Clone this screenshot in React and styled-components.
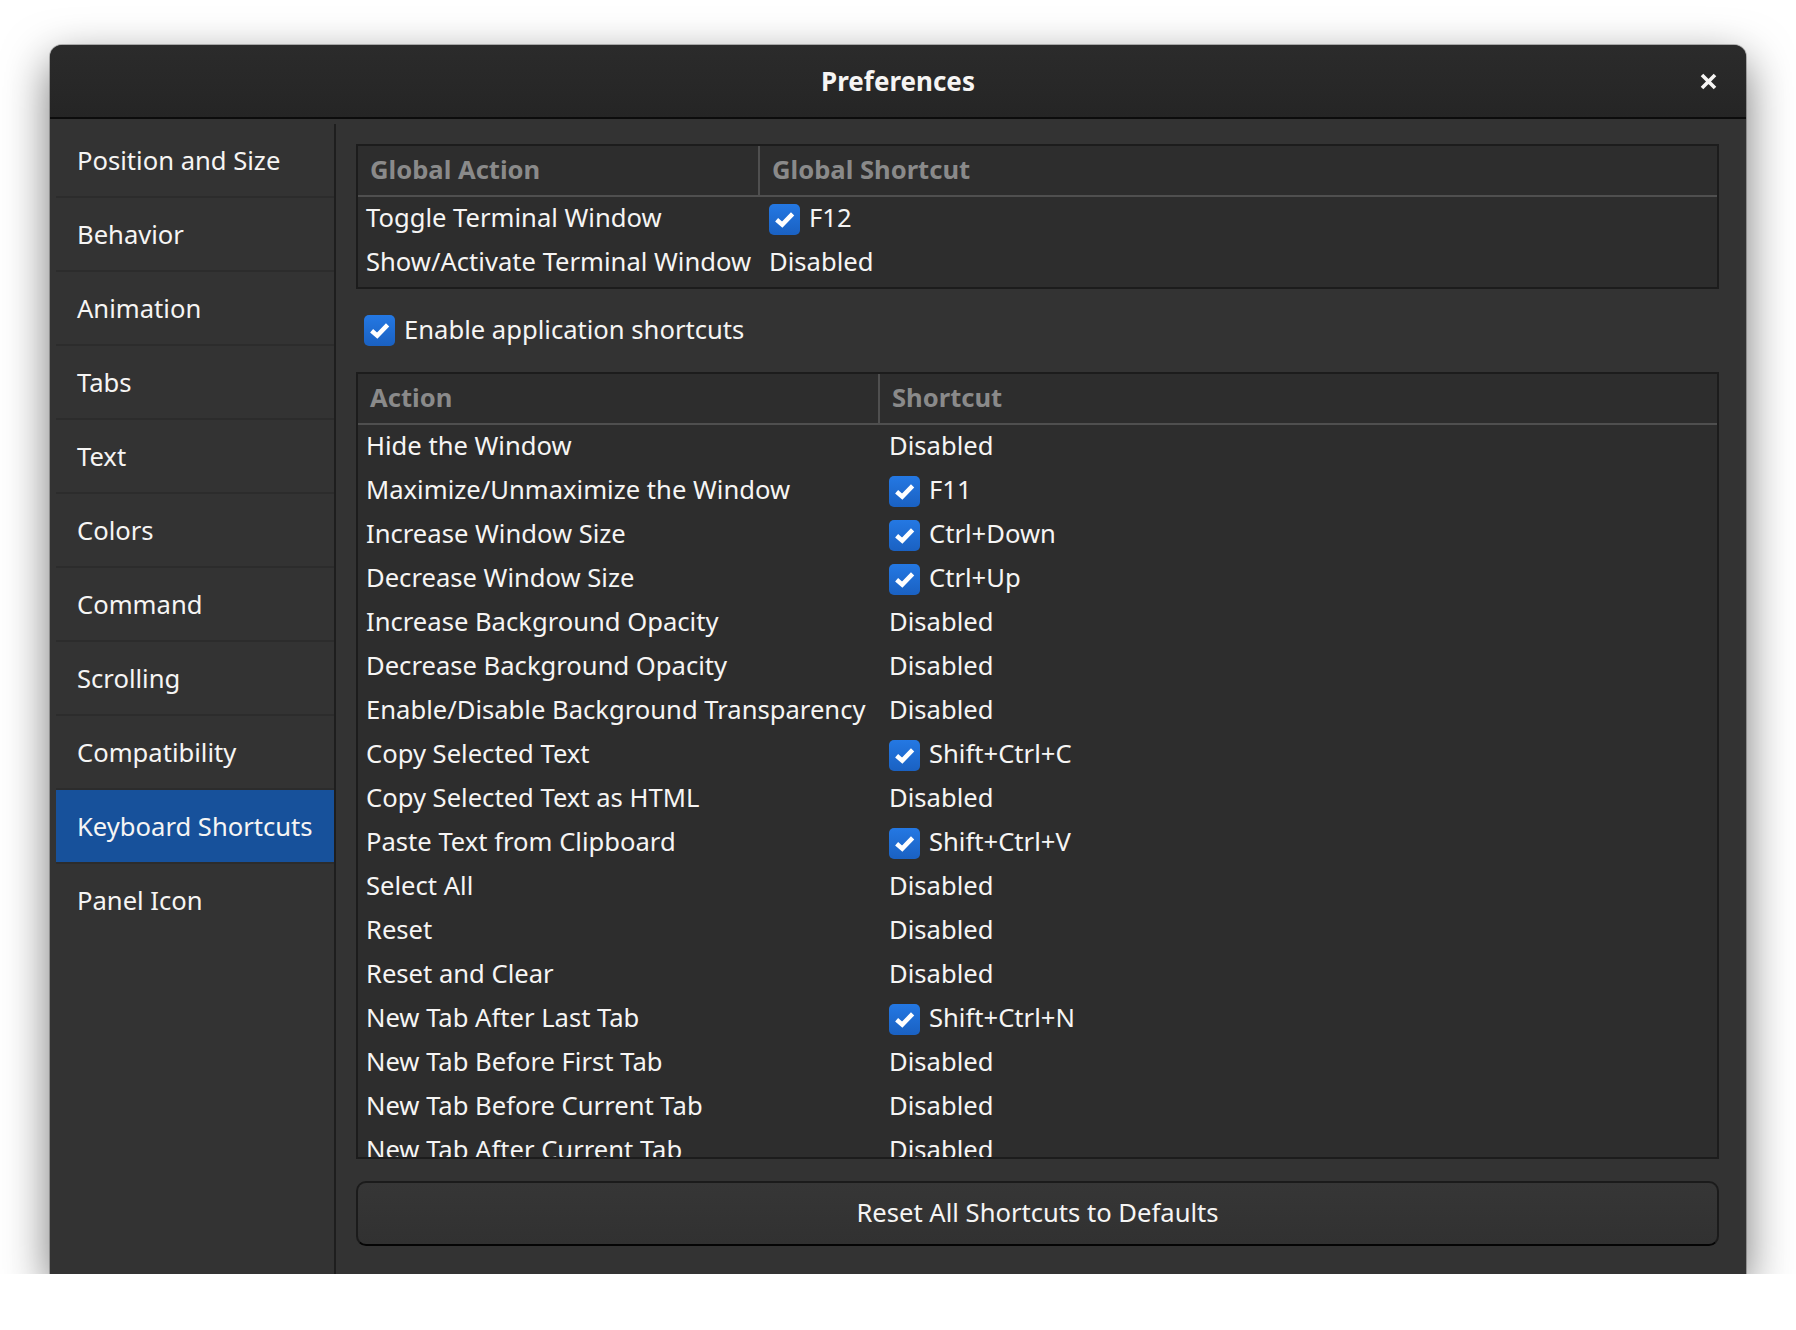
import React from 'react';
import styled, { createGlobalStyle } from 'styled-components';

const GlobalStyle = createGlobalStyle`
    html, body {
        margin: 0;
        background: #ffffff;
    }
    body {
        font-family: "Noto Sans", "Open Sans", sans-serif;
        color: #f6f5f4;
    }
`;

const Page = styled.div`
    padding: 45px 50px 0 50px;
`;

const Window = styled.div`
    width: 1696px;
    height: 1229px;
    display: flex;
    flex-direction: column;
    background: #333333;
    border-radius: 12px 12px 0 0;
    overflow: hidden;
    box-shadow: 0 16px 46px rgba(0, 0, 0, 0.55), 0 0 0 1px rgba(0, 0, 0, 0.25);
`;

const TitleBar = styled.header`
    height: 72px;
    flex: none;
    display: grid;
    grid-template-columns: 1fr auto 1fr;
    align-items: center;
    background: linear-gradient(#2b2b2b, #252525);
    border-bottom: 2px solid #0c0c0c;
`;

const Title = styled.div`
    grid-column: 2;
    font-size: 26px;
    font-weight: 700;
    color: #f6f5f4;
`;

const CloseButton = styled.button`
    justify-self: end;
    margin-right: 28px;
    width: 20px;
    height: 20px;
    padding: 0;
    border: 0;
    background: none;
    display: flex;
    align-items: center;
    justify-content: center;
`;

const Body = styled.div`
    flex: 1;
    display: flex;
    min-height: 0;
`;

const Sidebar = styled.nav`
    width: 278px;
    flex: none;
    margin-top: 5px;
    padding-left: 6px;
    border-right: 2px solid #1e1e1e;
    display: flex;
    flex-direction: column;
`;

const SideItem = styled.div`
    height: 72px;
    display: flex;
    align-items: center;
    padding-left: 21px;
    font-size: 25.6px;
    background: ${(p) => (p.$active ? '#17519b' : 'transparent')};
    border-bottom: 2px solid ${(p) => (p.$last ? 'transparent' : '#2c2c2c')};
`;

const Content = styled.main`
    flex: 1;
    min-width: 0;
    display: flex;
    flex-direction: column;
    gap: 22px;
    padding: 25px 27px 28px 20px;
`;

const Table = styled.div`
    background: #2d2d2d;
    border: 2px solid #1c1c1c;
    display: flex;
    flex-direction: column;
    padding-bottom: ${(p) => (p.$grow ? '0' : '2px')};
    ${(p) => (p.$grow ? 'flex: 1; min-height: 0; overflow: hidden;' : '')}
`;

const HeadRow = styled.div`
    display: grid;
    grid-template-columns: ${(p) => p.$first}px 1fr;
    height: 49px;
    flex: none;
    border-bottom: 2px solid #4f4f4f;
`;

const HeadCell = styled.div`
    display: flex;
    align-items: center;
    padding: 0 0 3px 12px;
    font-size: 25.6px;
    font-weight: 700;
    color: #8a8a8a;
    border-left: ${(p) => (p.$divider ? '2px solid #4f4f4f' : 'none')};
`;

const Row = styled.div`
    display: grid;
    grid-template-columns: ${(p) => p.$first}px 1fr;
    height: 44px;
    flex: none;
    align-items: center;
    font-size: 25.6px;
    white-space: nowrap;
`;

const ActionCell = styled.div`
    padding: 0 0 3px 8px;
`;

const ShortcutCell = styled.div`
    display: flex;
    align-items: center;
    gap: 9px;
    padding-left: 11px;

    & > span:last-child {
        padding-bottom: 3px;
    }
`;

const CheckBox = styled.span`
    width: 31px;
    height: 31px;
    flex: none;
    border-radius: 5px;
    background: linear-gradient(#2478e3, #1a61c2);
    display: inline-flex;
    align-items: center;
    justify-content: center;
`;

const EnableRow = styled.label`
    height: 39px;
    flex: none;
    display: flex;
    align-items: center;
    gap: 9px;
    padding-left: 8px;
    font-size: 25.6px;

    & > span:last-child {
        padding-bottom: 3px;
    }
`;

const ResetButton = styled.button`
    height: 65px;
    flex: none;
    border: 2px solid #1b1b1b;
    border-bottom-color: #050505;
    border-radius: 10px;
    background: linear-gradient(#363636, #313131);
    color: #f6f5f4;
    font-family: inherit;
    font-size: 25.6px;
    padding-bottom: 3px;
`;

function Check() {
    return (
        <CheckBox>
            <svg width="27" height="27" viewBox="0 0 24 24">
                <path
                    d="M5 12.2 L10 16.6 L19.2 7"
                    fill="none"
                    stroke="#ffffff"
                    strokeWidth="4"
                    strokeLinejoin="miter"
                />
            </svg>
        </CheckBox>
    );
}

const sideItems = [
    'Position and Size',
    'Behavior',
    'Animation',
    'Tabs',
    'Text',
    'Colors',
    'Command',
    'Scrolling',
    'Compatibility',
    'Keyboard Shortcuts',
    'Panel Icon',
];

const globalRows = [
    ['Toggle Terminal Window', 'F12'],
    ['Show/Activate Terminal Window', null],
];

const actionRows = [
    ['Hide the Window', null],
    ['Maximize/Unmaximize the Window', 'F11'],
    ['Increase Window Size', 'Ctrl+Down'],
    ['Decrease Window Size', 'Ctrl+Up'],
    ['Increase Background Opacity', null],
    ['Decrease Background Opacity', null],
    ['Enable/Disable Background Transparency', null],
    ['Copy Selected Text', 'Shift+Ctrl+C'],
    ['Copy Selected Text as HTML', null],
    ['Paste Text from Clipboard', 'Shift+Ctrl+V'],
    ['Select All', null],
    ['Reset', null],
    ['Reset and Clear', null],
    ['New Tab After Last Tab', 'Shift+Ctrl+N'],
    ['New Tab Before First Tab', null],
    ['New Tab Before Current Tab', null],
    ['New Tab After Current Tab', null],
];

function ShortcutTable({ first, head, rows, grow }) {
    return (
        <Table $grow={grow}>
            <HeadRow $first={first}>
                <HeadCell>{head[0]}</HeadCell>
                <HeadCell $divider>{head[1]}</HeadCell>
            </HeadRow>
            {rows.map(([action, key]) => (
                <Row $first={first} key={action}>
                    <ActionCell>{action}</ActionCell>
                    <ShortcutCell>
                        {key && <Check />}
                        <span>{key || 'Disabled'}</span>
                    </ShortcutCell>
                </Row>
            ))}
        </Table>
    );
}

function App() {
    return (
        <Page>
            <GlobalStyle />
            <Window>
                <TitleBar>
                    <Title>Preferences</Title>
                    <CloseButton aria-label="Close">
                        <svg width="17" height="17" viewBox="0 0 17 17">
                            <path
                                d="M2 2 L15 15 M15 2 L2 15"
                                stroke="#f6f5f4"
                                strokeWidth="3.6"
                            />
                        </svg>
                    </CloseButton>
                </TitleBar>
                <Body>
                    <Sidebar>
                        {sideItems.map((item, i) => (
                            <SideItem
                                key={item}
                                $active={item === 'Keyboard Shortcuts'}
                                $last={i === sideItems.length - 1}
                            >
                                {item}
                            </SideItem>
                        ))}
                    </Sidebar>
                    <Content>
                        <ShortcutTable
                            first={400}
                            head={['Global Action', 'Global Shortcut']}
                            rows={globalRows}
                        />
                        <EnableRow>
                            <Check />
                            <span>Enable application shortcuts</span>
                        </EnableRow>
                        <ShortcutTable
                            grow
                            first={520}
                            head={['Action', 'Shortcut']}
                            rows={actionRows}
                        />
                        <ResetButton>Reset All Shortcuts to Defaults</ResetButton>
                    </Content>
                </Body>
            </Window>
        </Page>
    );
}

export default App;
